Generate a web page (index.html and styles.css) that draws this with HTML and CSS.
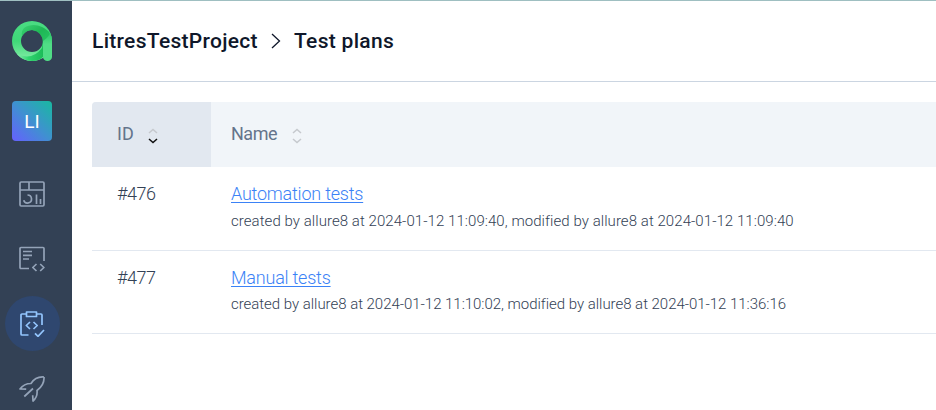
FILE: index.html
```html
<!DOCTYPE html>
<html lang="en">
<head>
<meta charset="utf-8">
<title>Test plans</title>
<link rel="stylesheet" href="styles.css">
</head>
<body>
<div class="app">
  <nav class="sidebar">
    <svg class="logo" viewBox="0 0 40 40">
      <defs>
        <linearGradient id="ring" x1="0" y1="0" x2="0" y2="1"><stop offset="0" stop-color="#4bdc83"/><stop offset=".5" stop-color="#3fd878"/><stop offset="1" stop-color="#85eda9"/></linearGradient>
        <linearGradient id="fold" x1="0" y1="0" x2="1" y2="1"><stop offset="0" stop-color="#3bd273"/><stop offset=".45" stop-color="#1fb756"/><stop offset="1" stop-color="#29cb67"/></linearGradient>
        <linearGradient id="stem" x1="0" y1="0" x2="0" y2="1"><stop offset="0" stop-color="#2cc768"/><stop offset=".4" stop-color="#50dd86"/><stop offset="1" stop-color="#50dd86"/></linearGradient>
        <linearGradient id="base" x1="0" y1="0" x2="1" y2="0"><stop offset="0" stop-color="#8af0af"/><stop offset=".45" stop-color="#2fd46e"/><stop offset="1" stop-color="#1bbb58"/></linearGradient>
      </defs>
      <path fill="url(#ring)" fill-rule="evenodd" d="M20 0a20 20 0 1 0 0 40a20 20 0 0 0 0-40zM20 9a11 11 0 1 1 0 22a11 11 0 0 1 0-22z"/>
      <path fill="url(#fold)" d="M12 7C21 1 31 5 37 11Q40 15 40 20V26L31 22Q31 11 20 9Q14 9 10 15Q9 10 12 7z"/>
      <path fill="url(#base)" d="M5 33Q20 40 30 27L31 20V36Q27 40 20 40Q11 40 5 33z"/>
      <path fill="url(#stem)" d="M31 20Q37 16 38 12Q40 16 40 20V36a4.5 4 0 0 1-9 0z"/>
    </svg>
    <div class="project">LI</div>
    <div class="nav-item">
      <svg class="icon" viewBox="0 0 26 26"><rect x="1" y="1" width="24" height="24" rx="1.2"/><path d="M1 9h24M10 1v8M8.5 14a4 4 0 1 1-3.8 5.2M17.5 13.5V23M21.5 18v5"/></svg>
    </div>
    <div class="nav-item">
      <svg class="icon" viewBox="0 0 26 26"><path d="M10 22.5H2Q1 22.5 1 21.5V2.5Q1 1.5 2 1.5H24Q25 1.5 25 2.5V15M4 5.5h9M4 9.3h9M4 13h6M17.5 18l-3.7 3.5l3.7 3.5M21.2 18l3.7 3.5l-3.7 3.5"/></svg>
    </div>
    <div class="nav-item active">
      <svg class="icon" viewBox="0 0 26 26"><path d="M7 3H3Q2 3 2 4V23Q2 24 3 24H9.5M18 3h4Q23 3 23 4V14M7.5 1h10v4.5h-10zM11 11l-3.7 3.5l3.7 3.5M14.5 11l3.7 3.5l-3.7 3.5M16 22.3l3 3l6-6.3"/></svg>
    </div>
    <div class="nav-item">
      <svg class="icon" viewBox="0 0 26 26"><path d="M25 1Q16.5.3 12 7.5Q5 7.5 1 13L7.2 13.2M25 1Q25.5 9 18 14.5Q18.8 21 14 25L13.7 19.3M14 12.5L5.3 20.5"/></svg>
    </div>
  </nav>
  <main class="main">
    <header class="breadcrumbs">
      <span class="crumb project-name">LitresTestProject</span>
      <svg class="separator" viewBox="0 0 10 16"><path d="M1 1l7.5 7L1 15"/></svg>
      <span class="crumb page-name">Test plans</span>
    </header>
    <section class="table">
      <div class="row head">
        <div class="cell id sorted"><span class="label-id">ID</span>
          <svg class="sort desc" viewBox="0 0 10 16"><path class="up" d="M1 5l4-3.6L9 5"/><path class="down" d="M1 11l4 3.6L9 11"/></svg>
        </div>
        <div class="cell name"><span class="label-name">Name</span>
          <svg class="sort" viewBox="0 0 10 16"><path class="up" d="M1 5l4-3.6L9 5"/><path class="down" d="M1 11l4 3.6L9 11"/></svg>
        </div>
      </div>
      <div class="row">
        <div class="cell id">#476</div>
        <div class="cell name"><a class="link">Automation tests</a><p class="meta">created by allure8 at 2024-01-12 11:09:40, modified by allure8 at 2024-01-12 11:09:40</p></div>
      </div>
      <div class="row second">
        <div class="cell id">#477</div>
        <div class="cell name"><a class="link">Manual tests</a><p class="meta">created by allure8 at 2024-01-12 11:10:02, modified by allure8 at 2024-01-12 11:36:16</p></div>
      </div>
    </section>
  </main>
</div>
</body>
</html>
```

FILE: styles.css
```css
* { box-sizing: border-box; }
body { margin: 0; background: #fff; color: #334155; font-family: Roboto, "Liberation Sans", sans-serif; overflow: hidden; }
.app { display: flex; height: 410px; border-top: 1px solid #9fbfc1; overflow: hidden; }
.sidebar { flex: none; width: 72px; background: #334155; display: flex; flex-direction: column; align-items: flex-start; padding: 20px 0 0 12px; }
.logo { flex: none; width: 40px; height: 40px; }
.project { flex: none; width: 40px; height: 40px; margin: 40px 0 25px; border-radius: 4px; background: linear-gradient(45deg, #6660ff, #3f91d0 50%, #18b9a0); color: #fff; font-size: 19px; line-height: 42px; text-align: center; }
.nav-item { flex: none; width: 55px; height: 55px; margin: 0 0 10px -7px; border-radius: 50%; display: flex; align-items: center; padding-left: 14px; color: #94a3b8; }
.nav-item.active { background: #2f476f; color: #93c5fd; }
.icon { width: 26px; height: 26px; fill: none; stroke: currentColor; stroke-width: 1.7; stroke-linejoin: round; }
.main { flex: 1; min-width: 0; }
.breadcrumbs { height: 81px; padding-left: 20px; border-bottom: 1px solid #cbd5e1; display: flex; align-items: center; color: #0f172a; font-size: 21px; font-weight: 500; letter-spacing: .3px; }
.crumb { white-space: nowrap; }
.project-name { width: 179px; }
.separator { width: 10px; height: 16px; margin-right: 13px; fill: none; stroke: #0f172a; stroke-width: 1.3; }
.table { margin: 20px 0 0 20px; }
.row { display: flex; height: 84px; border-bottom: 1px solid #e2e8f0; }
.row.second { height: 83px; }
.cell { padding-top: 15px; font-size: 18px; line-height: 24px; font-weight: 300; }
.cell.id { width: 119px; padding-left: 25px; letter-spacing: -.5px; }
.cell.name { flex: 1; padding-left: 20px; white-space: nowrap; letter-spacing: -.22px; }
.row.head { height: 65px; border: 0; background: #f1f5f9; border-radius: 4px 0 0 0; overflow: hidden; color: #64748b; }
.head .cell { display: flex; align-items: center; padding: 0 0 2px 25px; font-weight: 400; }
.head .cell.name { padding-left: 20px; letter-spacing: -.5px; }
.head .sorted { background: #e2e8f0; letter-spacing: 0; }
.label-id { width: 31px; }
.label-name { width: 61px; }
.sort { width: 10px; height: 16px; margin-top: 4px; fill: none; stroke: #c6c9ce; stroke-width: 1.5; }
.desc .down { stroke: #111; }
.link { display: block; color: #3b82f6; text-decoration: underline; text-decoration-thickness: 1px; text-underline-offset: 2px; }
.meta { margin: 5px 0 0; font-size: 15px; line-height: 20px; letter-spacing: .06px; }
.second .meta { margin-top: 4px; letter-spacing: -.03px; }
```
